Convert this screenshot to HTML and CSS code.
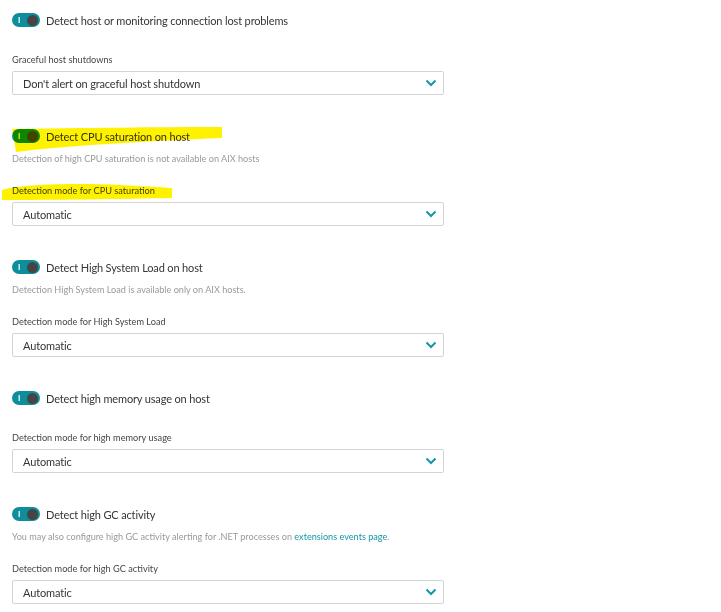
FILE: index.html
```html
<html>

<head>
  <link rel="stylesheet" href="styles.css">
</head>

<body>
  <div class="settings">

    <div class="setting">
      <div class="switch-row">
        <span class="switch"><span class="switch-on">I</span><span class="knob"></span></span>
        <span class="switch-label">Detect host or monitoring connection lost problems</span>
      </div>
      <div class="field">
        <div class="field-label">Graceful host shutdowns</div>
        <div class="select">
          <span>Don't alert on graceful host shutdown</span>
          <svg class="chevron" width="12" height="8" viewBox="0 0 12 8"><path d="M1.5 1.5 L6 6 L10.5 1.5" /></svg>
        </div>
      </div>
    </div>

    <div class="setting">
      <div class="switch-row">
        <span class="switch"><span class="switch-on">I</span><span class="knob"></span></span>
        <span class="switch-label">Detect CPU saturation on host</span>
      </div>
      <div class="hint">Detection of high CPU saturation is not available on AIX hosts</div>
      <div class="field">
        <div class="field-label">Detection mode for CPU saturation</div>
        <div class="select">
          <span>Automatic</span>
          <svg class="chevron" width="12" height="8" viewBox="0 0 12 8"><path d="M1.5 1.5 L6 6 L10.5 1.5" /></svg>
        </div>
      </div>
    </div>

    <div class="setting">
      <div class="switch-row">
        <span class="switch"><span class="switch-on">I</span><span class="knob"></span></span>
        <span class="switch-label">Detect High System Load on host</span>
      </div>
      <div class="hint">Detection High System Load is available only on AIX hosts.</div>
      <div class="field">
        <div class="field-label">Detection mode for High System Load</div>
        <div class="select">
          <span>Automatic</span>
          <svg class="chevron" width="12" height="8" viewBox="0 0 12 8"><path d="M1.5 1.5 L6 6 L10.5 1.5" /></svg>
        </div>
      </div>
    </div>

    <div class="setting">
      <div class="switch-row">
        <span class="switch"><span class="switch-on">I</span><span class="knob"></span></span>
        <span class="switch-label">Detect high memory usage on host</span>
      </div>
      <div class="field">
        <div class="field-label">Detection mode for high memory usage</div>
        <div class="select">
          <span>Automatic</span>
          <svg class="chevron" width="12" height="8" viewBox="0 0 12 8"><path d="M1.5 1.5 L6 6 L10.5 1.5" /></svg>
        </div>
      </div>
    </div>

    <div class="setting">
      <div class="switch-row">
        <span class="switch"><span class="switch-on">I</span><span class="knob"></span></span>
        <span class="switch-label">Detect high GC activity</span>
      </div>
      <div class="hint">You may also configure high GC activity alerting for .NET processes on <a href="#">extensions events page</a>.</div>
      <div class="field">
        <div class="field-label">Detection mode for high GC activity</div>
        <div class="select">
          <span>Automatic</span>
          <svg class="chevron" width="12" height="8" viewBox="0 0 12 8"><path d="M1.5 1.5 L6 6 L10.5 1.5" /></svg>
        </div>
      </div>
    </div>

  </div>

  <!-- highlighter marks drawn over the screenshot -->
  <svg class="marker" width="721" height="612" viewBox="0 0 721 612">
    <path d="M12 129 C80 128 160 127 222 127 L222 138 C150 141 60 146 16 152 Z" />
    <path d="M2 190 C20 184 80 183 120 185 C140 186 160 187 172 188 L172 198 C120 199 50 200 2 200 Z" />
  </svg>
</body>

</html>
```

FILE: styles.css
```css
body {
  margin: 0;
  padding: 10px 12px 0;
  font-family: Lato, "Open Sans", sans-serif;
  color: #353535;
  background: #ffffff;
}

.settings {
  width: 432px;
  display: flex;
  flex-direction: column;
}

.setting {
  display: flex;
  flex-direction: column;
  margin-bottom: 31px;
}

.switch-row {
  display: flex;
  align-items: center;
  gap: 6px;
  height: 20px;
}

.switch {
  display: flex;
  align-items: center;
  justify-content: space-between;
  box-sizing: border-box;
  width: 28px;
  height: 14px;
  padding: 0 2px 0 6px;
  border-radius: 7px;
  background: #0e8e9c;
}

.switch-on {
  color: #ffffff;
  font-size: 8px;
  line-height: 8px;
  font-weight: bold;
}

.knob {
  width: 11px;
  height: 11px;
  border-radius: 50%;
  background: #454545;
}

.switch-label {
  font-size: 11px;
  letter-spacing: -0.15px;
}

.hint {
  margin-top: 5px;
  height: 16px;
  line-height: 16px;
  font-size: 9.15px;
  color: #9a9a9a;
}

.hint a {
  color: #1497a6;
  text-decoration: none;
}

.field {
  display: flex;
  flex-direction: column;
  gap: 4px;
  margin-top: 23px;
}

.hint + .field {
  margin-top: 17px;
}

.field-label {
  height: 14px;
  line-height: 14px;
  font-size: 9.2px;
  color: #454646;
}

.select {
  display: flex;
  align-items: center;
  justify-content: space-between;
  box-sizing: border-box;
  height: 24px;
  padding: 0 6px 0 10px;
  border: 1px solid #d4d4d4;
  border-radius: 2px;
  font-size: 11px;
  letter-spacing: -0.15px;
  color: #353535;
}

.chevron path {
  fill: none;
  stroke: #1497a6;
  stroke-width: 2;
}

.marker {
  position: absolute;
  top: 0;
  left: 0;
  pointer-events: none;
  mix-blend-mode: multiply;
}

.marker path {
  fill: #fff200;
}
```
